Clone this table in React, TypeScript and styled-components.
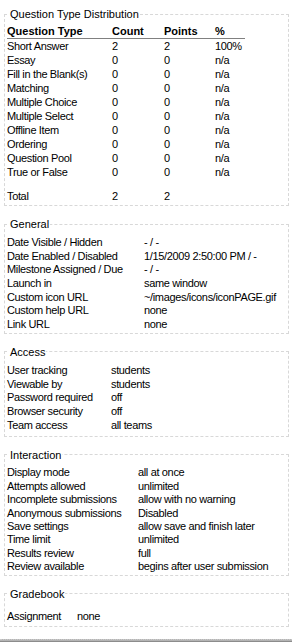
import React from 'react';
import styled, { createGlobalStyle } from 'styled-components';

const GlobalStyle = createGlobalStyle`
  html, body {
    margin: 0;
    padding: 0;
    background: #ffffff;
  }
  body {
    font-family: "Liberation Sans", Arial, sans-serif;
    font-size: 11px;
    letter-spacing: -0.35px;
    color: #000000;
  }
`;

const Page = styled.div`
  width: 292px;
  height: 644px;
  display: flex;
  flex-direction: column;
  padding: 8px 3px 0 4px;
  box-sizing: border-box;
  gap: 12px;
  overflow: hidden;
`;

const Box = styled.fieldset<{ $top?: number; $bottom?: number }>`
  margin: 0;
  padding: ${p => p.$top ?? 4}px 2px ${p => p.$bottom ?? 2}px 2px;
  border: 1px dashed #d8d8d8;
  min-width: 0;
`;

const Legend = styled.legend`
  padding: 0 1px;
  margin-left: 2px;
  line-height: 12px;
  font-size: 11px;
  letter-spacing: 0;
`;

const DistTable = styled.table`
  border-collapse: collapse;
  width: 238px;
`;

const HeadCell = styled.th<{ $w: number }>`
  text-align: left;
  font-weight: bold;
  font-size: 11px;
  letter-spacing: 0;
  padding: 0;
  height: 14px;
  width: ${p => p.$w}px;
  border-bottom: 1px solid #808080;
`;

const Cell = styled.td`
  padding: 0;
  height: 14px;
  line-height: 14px;
`;

const Spacer = styled.td`
  height: 10px;
  padding: 0;
`;

const Pairs = styled.div<{ $label: number; $row: number }>`
  display: grid;
  grid-template-columns: ${p => p.$label}px 1fr;
  grid-auto-rows: ${p => p.$row}px;
  align-items: center;
  padding-top: 1px;
`;

const Label = styled.span`
  white-space: nowrap;
`;

const Value = styled.span`
  white-space: nowrap;
`;

const BottomBar = styled.div`
  margin-top: auto;
  height: 3px;
  border-top: 1px dotted #c8c8c8;
  background: #b4b4b4;
  border-bottom: 1px solid #8c8c8c;
  margin-left: -4px;
  margin-right: -3px;
  margin-bottom: 2px;
`;

const dist: [string, string, string, string][] = [
  ['Short Answer', '2', '2', '100%'],
  ['Essay', '0', '0', 'n/a'],
  ['Fill in the Blank(s)', '0', '0', 'n/a'],
  ['Matching', '0', '0', 'n/a'],
  ['Multiple Choice', '0', '0', 'n/a'],
  ['Multiple Select', '0', '0', 'n/a'],
  ['Offline Item', '0', '0', 'n/a'],
  ['Ordering', '0', '0', 'n/a'],
  ['Question Pool', '0', '0', 'n/a'],
  ['True or False', '0', '0', 'n/a'],
];

const sections: {
  title: string;
  label: number;
  row: number;
  top?: number;
  bottom?: number;
  rows: [string, string][];
}[] = [
  {
    title: 'General',
    label: 137,
    row: 13.7,
    rows: [
      ['Date Visible / Hidden', '- / -'],
      ['Date Enabled / Disabled', '1/15/2009 2:50:00 PM / -'],
      ['Milestone Assigned / Due', '- / -'],
      ['Launch in', 'same window'],
      ['Custom icon URL', '~/images/icons/iconPAGE.gif'],
      ['Custom help URL', 'none'],
      ['Link URL', 'none'],
    ],
  },
  {
    title: 'Access',
    label: 104,
    row: 13.8,
    bottom: 4,
    rows: [
      ['User tracking', 'students'],
      ['Viewable by', 'students'],
      ['Password required', 'off'],
      ['Browser security', 'off'],
      ['Team access', 'all teams'],
    ],
  },
  {
    title: 'Interaction',
    label: 131,
    row: 13.4,
    rows: [
      ['Display mode', 'all at once'],
      ['Attempts allowed', 'unlimited'],
      ['Incomplete submissions', 'allow with no warning'],
      ['Anonymous submissions', 'Disabled'],
      ['Save settings', 'allow save and finish later'],
      ['Time limit', 'unlimited'],
      ['Results review', 'full'],
      ['Review available', 'begins after user submission'],
    ],
  },
  {
    title: 'Gradebook',
    label: 70,
    row: 13.7,
    top: 8,
    bottom: 3,
    rows: [['Assignment', 'none']],
  },
];

export default function App() {
  return (
    <>
      <GlobalStyle />
      <Page>
        <Box>
          <Legend>Question Type Distribution</Legend>
          <DistTable>
            <thead>
              <tr>
                <HeadCell $w={105}>Question Type</HeadCell>
                <HeadCell $w={52}>Count</HeadCell>
                <HeadCell $w={51}>Points</HeadCell>
                <HeadCell $w={30}>%</HeadCell>
              </tr>
            </thead>
            <tbody>
              {dist.map(r => (
                <tr key={r[0]}>
                  {r.map((c, i) => (
                    <Cell key={i}>{c}</Cell>
                  ))}
                </tr>
              ))}
              <tr>
                <Spacer colSpan={4} />
              </tr>
              <tr>
                <Cell>Total</Cell>
                <Cell>2</Cell>
                <Cell>2</Cell>
                <Cell />
              </tr>
            </tbody>
          </DistTable>
        </Box>
        {sections.map(s => (
          <Box key={s.title} $top={s.top} $bottom={s.bottom}>
            <Legend>{s.title}</Legend>
            <Pairs $label={s.label} $row={s.row}>
              {s.rows.map(([l, v]) => (
                <React.Fragment key={l}>
                  <Label>{l}</Label>
                  <Value>{v}</Value>
                </React.Fragment>
              ))}
            </Pairs>
          </Box>
        ))}
        <BottomBar />
      </Page>
    </>
  );
}
